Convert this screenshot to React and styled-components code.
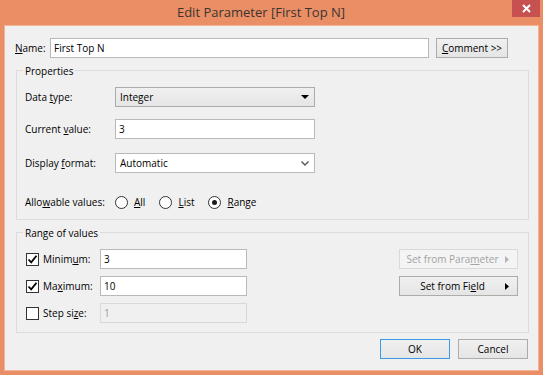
import React from 'react'
import styled, { createGlobalStyle } from 'styled-components'

const GlobalStyle = createGlobalStyle`
  html, body {
    margin: 0;
    padding: 0;
  }
  body {
    background: #ea8e66;
    font-family: "Open Sans", "Noto Sans", sans-serif;
    font-size: 10px;
    color: #000;
  }
`

const Window = styled.div`
  width: 543px;
  height: 375px;
  display: flex;
  flex-direction: column;
  background: #ea8e66;
`

const TitleBar = styled.div`
  height: 26px;
  display: flex;
  align-items: flex-start;
  padding: 0 3px 0 10px;
`

const Title = styled.div`
  flex: 1;
  text-align: center;
  font-size: 13px;
  line-height: 25px;
  color: #3b3530;
`

const CloseButton = styled.div`
  width: 28px;
  height: 17px;
  background: #c75050;
  display: flex;
  align-items: center;
  justify-content: center;
`

const Client = styled.div`
  flex: 1;
  margin: 0 5px 5px;
  background: #f0f0f0;
  padding: 12px 9px 0 10px;
  box-shadow: 0 0 0 1px #f2b59a;
`

const NameRow = styled.div`
  display: flex;
  align-items: center;
  height: 20px;
`

const Label = styled.label`
  width: ${p => p.$w || 'auto'};
  flex-shrink: 0;
  white-space: nowrap;
`

const TextInput = styled.input`
  box-sizing: border-box;
  width: ${p => p.$w};
  height: ${p => p.$h || '20px'};
  margin: 0;
  padding: 0 3px;
  border: 1px solid ${p => (p.disabled ? '#d9d9d9' : '#b9b9b9')};
  background: ${p => (p.disabled ? '#f0f0f0' : '#fff')};
  color: ${p => (p.disabled ? '#9a9a9a' : '#000')};
  font: inherit;
  outline: none;
  &:disabled {
    color: #9a9a9a;
  }
`

const Button = styled.div`
  box-sizing: border-box;
  width: ${p => p.$w};
  height: 20px;
  display: flex;
  align-items: center;
  justify-content: center;
  margin-left: ${p => p.$ml || '0px'};
  border: 1px solid ${p => (p.$default ? '#3c9ae8' : p.$disabled ? '#d9d9d9' : '#acacac')};
  background: ${p =>
    p.$disabled ? '#f4f4f4' : 'linear-gradient(#f0f0f0, #e5e5e5)'};
  color: ${p => (p.$disabled ? '#a3a3a3' : '#000')};
  white-space: nowrap;
`

const MenuButton = styled(Button)`
  justify-content: space-between;
  padding: 0 8px 0 0;
`

const MenuText = styled.span`
  flex: 1;
  text-align: center;
`

const Group = styled.fieldset`
  margin: ${p => p.$mt} 0 0 1px;
  padding: ${p => p.$pad};
  border: 1px solid #dcdcdc;
  min-width: 0;
`

const Legend = styled.legend`
  padding: 0 2px;
  margin-left: ${p => p.$ml};
  line-height: 14px;
  color: #000;
  position: relative;
  top: 1px;
`

const PropRow = styled.div`
  display: grid;
  grid-template-columns: 90px 200px;
  align-items: center;
  height: 20px;
  margin-top: ${p => p.$mt || '0px'};
`

const Select = styled.div`
  box-sizing: border-box;
  height: 20px;
  display: flex;
  align-items: center;
  justify-content: space-between;
  padding: 0 5px 0 4px;
  border: 1px solid ${p => (p.$flat ? '#b9b9b9' : '#acacac')};
  background: ${p => (p.$flat ? '#fff' : 'linear-gradient(#f0f0f0, #e5e5e5)')};
`

const Radios = styled.div`
  display: flex;
  align-items: center;
  gap: 14px;
`

const RadioOption = styled.label`
  display: flex;
  align-items: center;
  gap: 6px;
`

const RadioCircle = styled.span`
  box-sizing: border-box;
  width: 13px;
  height: 13px;
  border-radius: 50%;
  border: 1px solid #333;
  background: #fff;
  display: flex;
  align-items: center;
  justify-content: center;
  &::after {
    content: '';
    width: 5px;
    height: 5px;
    border-radius: 50%;
    background: ${p => (p.$on ? '#1a1a1a' : 'transparent')};
  }
`

const RangeGrid = styled.div`
  display: grid;
  grid-template-columns: 74px 147px 1fr 119px;
  grid-template-rows: 20px 20px 20px;
  row-gap: 7px;
  align-items: center;
`

const CheckLabel = styled.label`
  display: flex;
  align-items: center;
  gap: 4px;
`

const Box = styled.span`
  box-sizing: border-box;
  width: 13px;
  height: 13px;
  border: 1px solid #333;
  background: #fff;
  display: flex;
  align-items: center;
  justify-content: center;
`

const Footer = styled.div`
  display: flex;
  justify-content: flex-end;
  gap: 8px;
  margin-top: 6px;
  padding-right: 1px;
`

const Arrow = ({ color = '#000' }) => (
  <svg width="4" height="7" viewBox="0 0 4 7">
    <path d="M0 0 L4 3.5 L0 7 Z" fill={color} />
  </svg>
)

const Check = ({ on }) => (
  <Box>
    {on && (
      <svg width="11" height="11" viewBox="0 0 11 11">
        <path d="M1.5 5.5 L4.2 8.3 L9.5 1.8" fill="none" stroke="#000" strokeWidth="1.8" />
      </svg>
    )}
  </Box>
)

function Radio({ on, children }) {
  return (
    <RadioOption>
      <RadioCircle $on={on} />
      <span>{children}</span>
    </RadioOption>
  )
}

function CheckItem({ on, children }) {
  return (
    <CheckLabel>
      <Check on={on} />
      <span>{children}</span>
    </CheckLabel>
  )
}

export default function App() {
  return (
    <Window>
      <GlobalStyle />
      <TitleBar>
        <Title>Edit Parameter [First Top N]</Title>
        <CloseButton>
          <svg width="9" height="9" viewBox="0 0 9 9">
            <path d="M1 1 L8 8 M8 1 L1 8" stroke="#fff" strokeWidth="2" />
          </svg>
        </CloseButton>
      </TitleBar>
      <Client>
        <NameRow>
          <Label $w="35px"><u>N</u>ame:</Label>
          <TextInput $w="379px" value="First Top N" readOnly />
          <Button $w="72px" $ml="7px"><u>C</u>omment &gt;&gt;</Button>
        </NameRow>

        <Group $mt="5px" $pad="10px 8px 7px">
          <Legend $ml="-2px">Properties</Legend>
          <PropRow>
            <Label>Data <u>t</u>ype:</Label>
            <Select>
              <span>Integer</span>
              <svg width="8" height="4" viewBox="0 0 8 4">
                <path d="M0 0 L8 0 L4 4 Z" fill="#000" />
              </svg>
            </Select>
          </PropRow>
          <PropRow $mt="12px">
            <Label>Current <u>v</u>alue:</Label>
            <TextInput $w="200px" value="3" readOnly />
          </PropRow>
          <PropRow $mt="14px">
            <Label>Display <u>f</u>ormat:</Label>
            <Select $flat>
              <span>Automatic</span>
              <svg width="8" height="5" viewBox="0 0 8 5">
                <path d="M0.5 0.5 L4 4 L7.5 0.5" fill="none" stroke="#555" strokeWidth="1.4" />
              </svg>
            </Select>
          </PropRow>
          <PropRow $mt="19px">
            <Label>Allo<u>w</u>able values:</Label>
            <Radios>
              <Radio><u>A</u>ll</Radio>
              <Radio><u>L</u>ist</Radio>
              <Radio on><u>R</u>ange</Radio>
            </Radios>
          </PropRow>
        </Group>

        <Group $mt="5px" $pad="10px 10px 9px 9px">
          <Legend $ml="-3px">Range of values</Legend>
          <RangeGrid>
            <CheckItem on>Minim<u>u</u>m:</CheckItem>
            <TextInput $w="147px" value="3" readOnly />
            <span />
            <MenuButton $w="119px" $disabled>
              <MenuText>Set from Para<u>m</u>eter</MenuText>
              <Arrow color="#b5b5b5" />
            </MenuButton>

            <CheckItem on>Ma<u>x</u>imum:</CheckItem>
            <TextInput $w="147px" value="10" readOnly />
            <span />
            <MenuButton $w="119px">
              <MenuText>Set from Fi<u>e</u>ld</MenuText>
              <Arrow />
            </MenuButton>

            <CheckItem>Step si<u>z</u>e:</CheckItem>
            <TextInput $w="147px" value="1" disabled readOnly />
          </RangeGrid>
        </Group>

        <Footer>
          <Button $w="70px" $default>OK</Button>
          <Button $w="70px">Cancel</Button>
        </Footer>
      </Client>
    </Window>
  )
}
